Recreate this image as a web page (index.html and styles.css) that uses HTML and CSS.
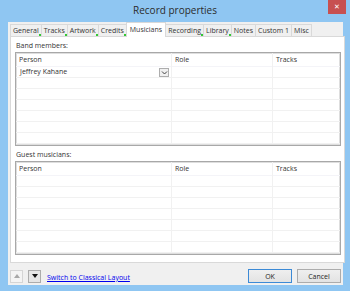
FILE: index.html
```html
<!DOCTYPE html>
<html lang="en">
<head>
<meta charset="UTF-8">
<title>Record properties</title>
<link rel="stylesheet" href="styles.css">
</head>
<body>

<div class="window">
  <div class="titlebar">
    <span></span>
    <div class="title">Record properties</div>
    <div class="close">&#x2715;</div>
  </div>

  <div class="client">
    <div class="tabs">
      <div class="tab filled">General</div>
      <div class="tab filled">Tracks</div>
      <div class="tab filled">Artwork</div>
      <div class="tab filled">Credits</div>
      <div class="tab active">Musicians</div>
      <div class="tab filled">Recording</div>
      <div class="tab filled">Library</div>
      <div class="tab">Notes</div>
      <div class="tab">Custom 1</div>
      <div class="tab">Misc</div>
    </div>

    <div class="panel">
      <div class="label">Band members:</div>
      <div class="list">
        <div class="row head">
          <div class="cell">Person</div>
          <div class="cell">Role</div>
          <div class="cell">Tracks</div>
        </div>
        <div class="row">
          <div class="cell combo">Jeffrey Kahane
            <span class="drop"><svg width="7" height="5" viewBox="0 0 7 5"><path d="M1 1.5 L3.5 4 L6 1.5" fill="none" stroke="#444" stroke-width="1"/></svg></span>
          </div>
          <div class="cell"></div>
          <div class="cell"></div>
        </div>
        <div class="row"><div class="cell"></div><div class="cell"></div><div class="cell"></div></div>
        <div class="row"><div class="cell"></div><div class="cell"></div><div class="cell"></div></div>
        <div class="row"><div class="cell"></div><div class="cell"></div><div class="cell"></div></div>
        <div class="row"><div class="cell"></div><div class="cell"></div><div class="cell"></div></div>
        <div class="row"><div class="cell"></div><div class="cell"></div><div class="cell"></div></div>
        <div class="row"><div class="cell"></div><div class="cell"></div><div class="cell"></div></div>
      </div>

      <div class="label second">Guest musicians:</div>
      <div class="list">
        <div class="row head">
          <div class="cell">Person</div>
          <div class="cell">Role</div>
          <div class="cell">Tracks</div>
        </div>
        <div class="row"><div class="cell"></div><div class="cell"></div><div class="cell"></div></div>
        <div class="row"><div class="cell"></div><div class="cell"></div><div class="cell"></div></div>
        <div class="row"><div class="cell"></div><div class="cell"></div><div class="cell"></div></div>
        <div class="row"><div class="cell"></div><div class="cell"></div><div class="cell"></div></div>
        <div class="row"><div class="cell"></div><div class="cell"></div><div class="cell"></div></div>
        <div class="row"><div class="cell"></div><div class="cell"></div><div class="cell"></div></div>
        <div class="row"><div class="cell"></div><div class="cell"></div><div class="cell"></div></div>
      </div>
    </div>

    <div class="footer">
      <div class="arrow disabled"><svg width="6" height="4" viewBox="0 0 6 4"><path d="M0 4 L3 0 L6 4 Z" fill="#a8a8a8"/></svg></div>
      <div class="arrow"><svg width="6" height="4" viewBox="0 0 6 4"><path d="M0 0 L6 0 L3 4 Z" fill="#111"/></svg></div>
      <a class="switch" href="#">Switch to Classical Layout</a>
      <div class="spacer"></div>
      <button class="btn default">OK</button>
      <button class="btn">Cancel</button>
    </div>
  </div>
</div>

</body>
</html>
```

FILE: styles.css
```css
body {
  margin: 0;
  width: 350px;
  height: 291px;
  overflow: hidden;
  background-color: #8fc6f2;
  font-family: "Open Sans", "Liberation Sans", sans-serif;
  color: #333;
}

.window {
  display: flex;
  flex-direction: column;
  height: 291px;
}

.titlebar {
  height: 22px;
  display: grid;
  grid-template-columns: 1fr auto 1fr;
  align-items: start;
}

.title {
  font-size: 10px;
  line-height: 21px;
  color: #2b2b2b;
}

.close {
  justify-self: end;
  margin-right: 4px;
  width: 18px;
  height: 14px;
  background-color: #c75050;
  color: #fff;
  font-size: 7px;
  line-height: 14px;
  text-align: center;
  font-family: "DejaVu Sans", sans-serif;
}

.client {
  margin: 0 7px 6px 8px;
  height: 263px;
  background-color: #f0f0f0;
  display: flex;
  flex-direction: column;
}

/* tabs */
.tabs {
  display: flex;
  align-items: flex-end;
  height: 14px;
  padding-left: 2px;
  position: relative;
  z-index: 1;
}

.tab {
  height: 11px;
  padding: 0 2px;
  border: 1px solid #d9d9d9;
  border-bottom: none;
  margin-right: -1px;
  background-color: #f0f0f0;
  font-size: 7px;
  line-height: 11px;
  position: relative;
}

.tab.filled::after {
  content: "";
  position: absolute;
  right: 0;
  bottom: 0;
  width: 2px;
  height: 2px;
  background-color: #32c832;
}

.tab.active {
  height: 14px;
  line-height: 13px;
  background-color: #fff;
  padding: 0 3px;
  margin-bottom: -1px;
}

.panel {
  margin-left: 2px;
  width: 326px;
  height: 225px;
  border: 1px solid #d9d9d9;
  background-color: #fff;
  padding: 0 3px 0 4px;
}

.label {
  font-size: 7px;
  line-height: 9px;
  margin: 4px 0 2px 1px;
}

.list {
  border: 1px solid #a8a8a8;
  box-shadow: inset 0 0 0 1px #dedede;
  height: 92px;
  overflow: hidden;
}

.row {
  display: grid;
  grid-template-columns: 156px 101px 1fr;
  height: 10px;
  border-bottom: 1px solid #f1f1f1;
}

.row.head {
  height: 13px;
  border-bottom: 1px solid #f4f4f8;
}

.cell {
  border-right: 1px solid #f1f1f1;
  font-size: 7px;
  line-height: 10px;
  padding-left: 4px;
}

.head .cell {
  line-height: 14px;
  padding-left: 3px;
}

.cell:last-child {
  border-right: none;
}

.combo {
  display: flex;
  align-items: center;
  justify-content: space-between;
  padding-right: 2px;
}

.drop {
  width: 8px;
  height: 7px;
  border: 1px solid #adadad;
  background-color: #f0f0f0;
  display: flex;
  align-items: center;
  justify-content: center;
}

/* footer */
.footer {
  display: flex;
  align-items: center;
  padding: 6px 2px 0 2px;
  gap: 5px;
}

.arrow {
  width: 11px;
  height: 11px;
  border: 1px solid #acacac;
  background-color: #e5e5e5;
  display: flex;
  align-items: center;
  justify-content: center;
}

.arrow.disabled {
  border-color: #d5d5d5;
  background-color: #f4f4f4;
}

.switch {
  font-size: 7px;
  color: #0000ee;
  margin-left: 1px;
  margin-top: 2px;
}

.spacer {
  flex: 1;
}

.btn {
  width: 44px;
  height: 14px;
  padding: 0;
  border: 1px solid #acacac;
  background: linear-gradient(#efefef, #e3e3e3);
  font-family: inherit;
  font-size: 7px;
  color: #1e1e1e;
}

.btn.default {
  border-color: #3c8ad6;
}
```
